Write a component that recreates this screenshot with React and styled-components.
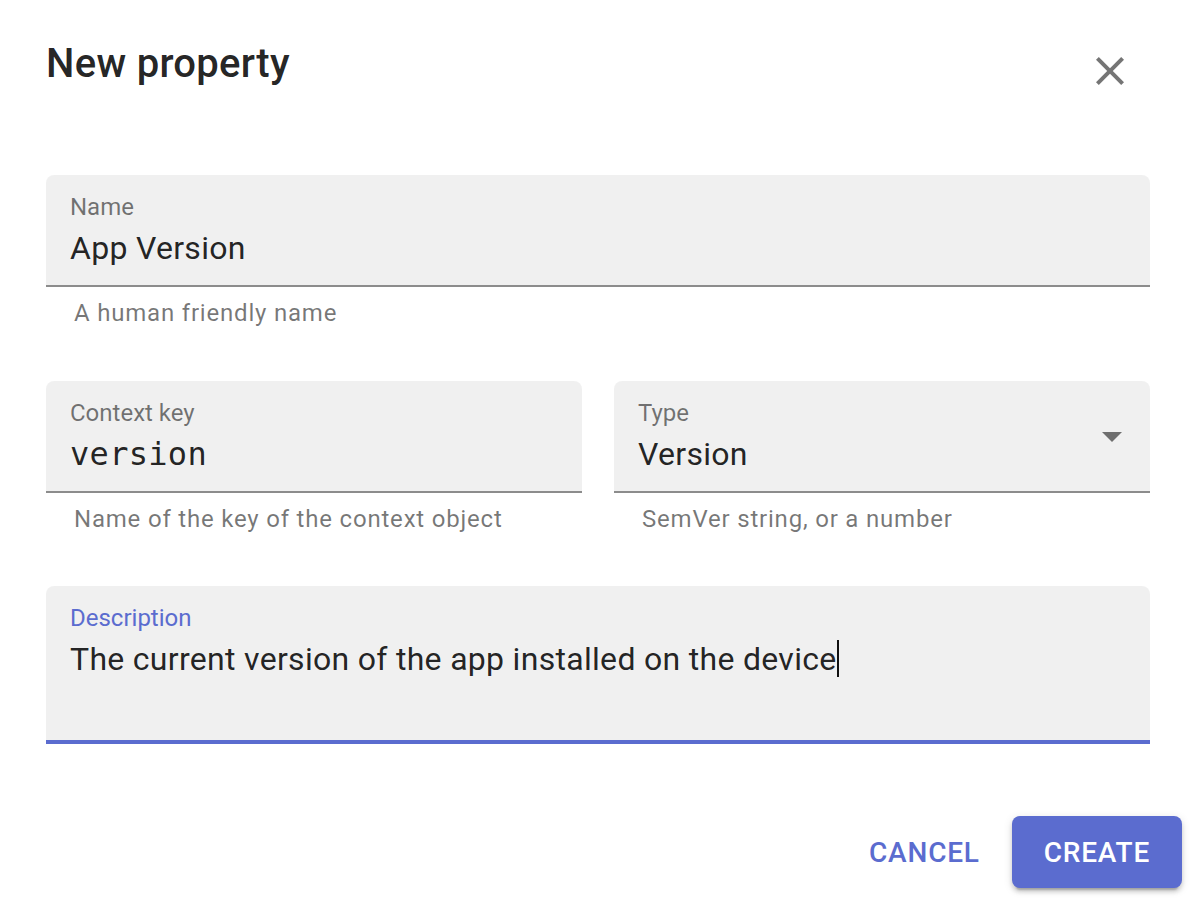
import styled, { createGlobalStyle } from 'styled-components';

const Global = createGlobalStyle`
  html,body{margin:0;padding:0;background:#fff;}
  body{font-family:Roboto,"Liberation Sans",Arial,sans-serif;-webkit-font-smoothing:antialiased;}
`;

const BLUE = '#5b6ccf';

const Dialog = styled.div`
  position:relative;width:1196px;height:904px;background:#fff;
  display:flex;flex-direction:column;box-sizing:border-box;overflow:hidden;
`;

const Header = styled.div`padding:32px 48px 32px 46px;`;

const Title = styled.h2`
  margin:0;font-size:40px;line-height:64px;font-weight:500;
  letter-spacing:0.0075em;color:rgba(0,0,0,.87);
`;

const CloseBtn = styled.button`
  position:absolute;top:47px;left:1086px;width:48px;height:48px;
  padding:0;border:none;background:none;cursor:pointer;
  display:flex;align-items:center;justify-content:center;
`;

const Content = styled.div`padding:15px 46px 0;`;

const FormControl = styled.div`margin:${({$mt})=>$mt??32}px 0 16px;`;

const Row = styled.div`display:grid;grid-template-columns:1fr 1fr;column-gap:32px;`;

const Filled = styled.div`
  position:relative;box-sizing:border-box;
  height:${({$h})=>$h||112}px;padding:20px 24px 0;
  background:rgba(0,0,0,.06);border-radius:8px 8px 0 0;
  border-bottom:${({$focus})=>$focus?`4px solid ${BLUE}`:'2px solid rgba(0,0,0,.42)'};
`;

const Label = styled.div`
  font-size:24px;line-height:24px;
  color:${({$focus})=>$focus?BLUE:'rgba(0,0,0,.54)'};
`;

const Value = styled.div`
  margin-top:10px;font-size:32px;line-height:38px;color:rgba(0,0,0,.87);
  font-family:${({$mono})=>$mono?'"DejaVu Sans Mono","Liberation Mono",monospace':'inherit'};
  letter-spacing:0.3px;
  white-space:nowrap;
`;

const Caret = styled.span`
  display:inline-block;width:2px;height:37px;background:#111;vertical-align:top;
`;

const Arrow = styled.svg`position:absolute;right:14px;top:calc(50% - 24px);`;

const Helper = styled.div`
  margin:6px 28px 0;font-size:24px;line-height:40px;
  letter-spacing:0.0333em;color:rgba(0,0,0,.54);
`;

const Actions = styled.div`
  margin-top:auto;display:flex;justify-content:flex-end;align-items:center;
  gap:16px;padding:16px 14px 16px 16px;
`;

const Button = styled.button`
  height:72px;min-width:128px;box-sizing:border-box;
  padding:0 ${({$contained})=>$contained?32:16}px;
  border:none;border-radius:8px;cursor:pointer;
  font-family:Roboto,"Liberation Sans",sans-serif;font-size:28px;font-weight:500;
  letter-spacing:0.02857em;text-transform:uppercase;
  color:${({$contained})=>$contained?'#fff':BLUE};
  background:${({$contained})=>$contained?BLUE:'transparent'};
  box-shadow:${({$contained})=>$contained?'0 6px 2px -4px rgba(0,0,0,.2),0 4px 4px 0 rgba(0,0,0,.14),0 2px 10px 0 rgba(0,0,0,.12)':'none'};
`;

const Field = ({label,value,helper,mono,focus,h,mt,select,children})=>(
  <FormControl $mt={mt}>
    <Filled $focus={focus} $h={h}>
      <Label $focus={focus}>{label}</Label>
      <Value $mono={mono}>{value}{children}</Value>
      {select&&(
        <Arrow width="48" height="48" viewBox="0 0 24 24"><path d="M7 10l5 5 5-5z" fill="rgba(0,0,0,.54)"/></Arrow>
      )}
    </Filled>
    {helper&&<Helper>{helper}</Helper>}
  </FormControl>
);

export default function App(){
  return(
    <>
      <Global/>
      <Dialog>
        <Header><Title>New property</Title></Header>
        <CloseBtn aria-label="close">
          <svg width="48" height="48" viewBox="0 0 24 24">
            <path fill="rgba(0,0,0,.54)" d="M19 6.41L17.59 5 12 10.59 6.41 5 5 6.41 10.59 12 5 17.59 6.41 19 12 13.41 17.59 19 19 17.59 13.41 12z"/>
          </svg>
        </CloseBtn>
        <Content>
          <Field label="Name" value="App Version" helper="A human friendly name"/>
          <Row>
            <Field label="Context key" value="version" mono helper="Name of the key of the context object"/>
            <Field label="Type" value="Version" select helper="SemVer string, or a number"/>
          </Row>
          <Field label="Description" value="The current version of the app installed on the device" focus h={158} mt={31}>
            <Caret/>
          </Field>
        </Content>
        <Actions>
          <Button>Cancel</Button>
          <Button $contained>Create</Button>
        </Actions>
      </Dialog>
    </>
  );
}
